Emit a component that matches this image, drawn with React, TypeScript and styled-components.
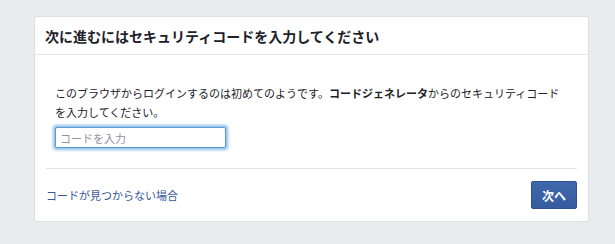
import React from "react";
import styled, { createGlobalStyle } from "styled-components";

const GlobalStyle = createGlobalStyle`
  html, body {
    margin: 0;
    padding: 0;
    background: #e9ebee;
  }
  body {
    font-family: "Noto Sans CJK JP", "Liberation Sans", sans-serif;
    color: #1d2129;
  }
`;

const Page = styled.div`
  width: 615px;
  height: 244px;
  box-sizing: border-box;
  padding: 16px 26px 0 34px;
`;

const Card = styled.div`
  width: 555px;
  box-sizing: border-box;
  background: #ffffff;
  border: 1px solid #dddfe2;
  border-radius: 3px;
`;

const Header = styled.div`
  height: 37px;
  display: flex;
  align-items: center;
  padding: 0 10px;
  border-bottom: 1px solid #e5e5e5;
`;

const Title = styled.h2`
  margin: 0;
  font-size: 14px;
  font-weight: 700;
  line-height: 18px;
  color: #1d2129;
`;

const Body = styled.div`
  padding: 29px 20px 20px 20px;
`;

const Message = styled.p`
  margin: 0;
  font-size: 11px;
  line-height: 19px;
  color: #1d2129;
  & b {
    font-weight: 700;
  }
`;

const CodeInput = styled.input`
  display: block;
  margin-top: 5px;
  width: 171px;
  height: 21px;
  box-sizing: border-box;
  padding: 0 4px;
  border: 1px solid #5a9bd2;
  border-radius: 2px;
  box-shadow: 0 0 3px 1.5px rgba(98, 170, 228, 0.75);
  font-family: "Noto Sans CJK JP", "Liberation Sans", sans-serif;
  font-size: 11px;
  color: #1d2129;
  outline: none;
  &::placeholder {
    color: #90949c;
  }
`;

const Footer = styled.div`
  margin: 0 11px;
  border-top: 1px solid #e5e5e5;
  padding: 12px 0 12px;
  display: flex;
  align-items: center;
  justify-content: space-between;
`;

const HelpLink = styled.a`
  font-size: 11px;
  line-height: 16px;
  color: #365899;
  text-decoration: none;
  cursor: pointer;
`;

const NextButton = styled.button`
  width: 46px;
  height: 28px;
  box-sizing: border-box;
  border: 1px solid #2d5192;
  border-radius: 2px;
  background: linear-gradient(#3f68ac, #355c9f);
  color: #ffffff;
  font-family: "Noto Sans CJK JP", "Liberation Sans", sans-serif;
  font-size: 12px;
  font-weight: 700;
  padding: 0;
  cursor: pointer;
`;

const App = () => {
  return (
    <Page>
      <GlobalStyle />
      <Card>
        <Header>
          <Title>次に進むにはセキュリティコードを入力してください</Title>
        </Header>
        <Body>
          <Message>
            このブラウザからログインするのは初めてのようです。
            <b>コードジェネレータ</b>からのセキュリティコードを入力してください。
          </Message>
          <CodeInput placeholder="コードを入力" />
        </Body>
        <Footer>
          <HelpLink>コードが見つからない場合</HelpLink>
          <NextButton>次へ</NextButton>
        </Footer>
      </Card>
    </Page>
  );
};

export default App;
